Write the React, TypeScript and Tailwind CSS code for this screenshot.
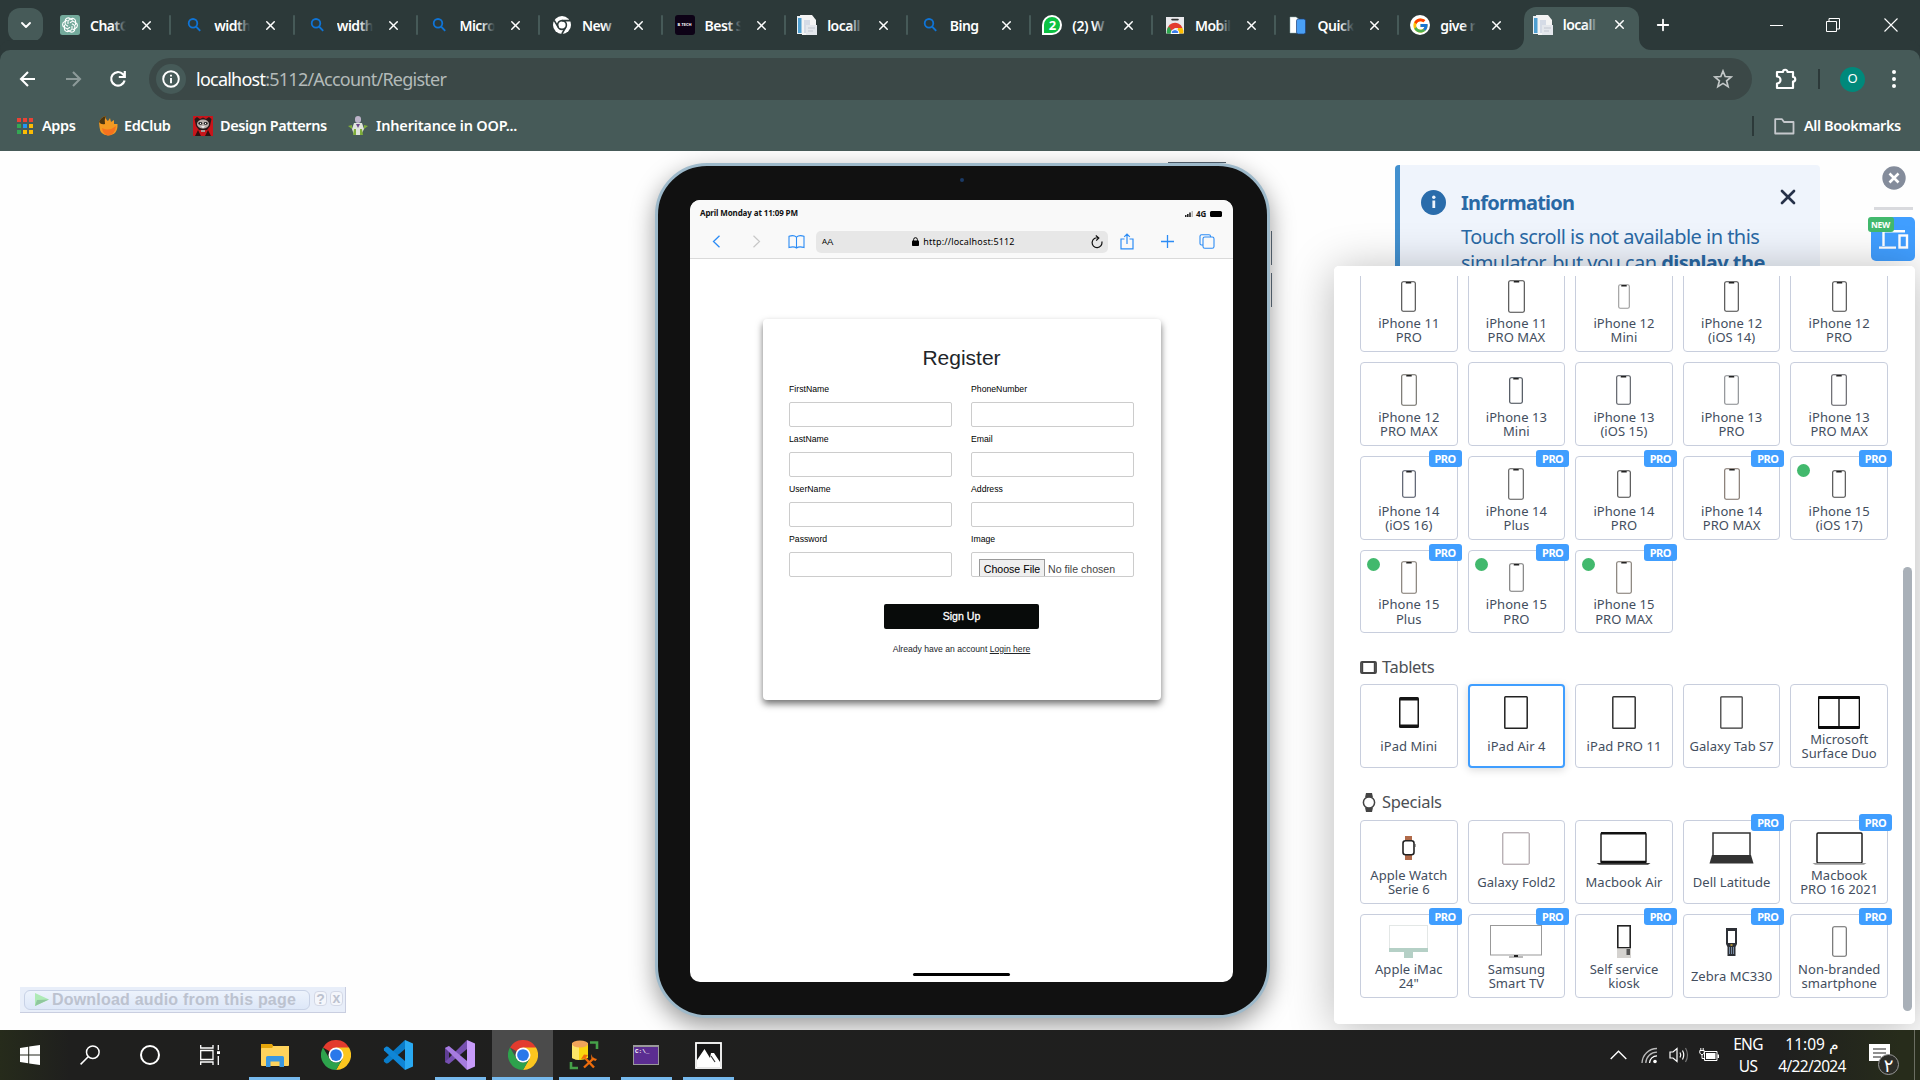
import type { ReactNode } from "react";
import { ChevronDown, X, Plus } from "lucide-react";
import { FcGoogle } from "react-icons/fc";

/* ---------- Favicons ---------- */

const SearchFav = () => (
  <svg width="20" height="20" viewBox="0 0 20 20" fill="none" stroke="#0f74d6" strokeWidth="1.8">
    <circle cx="9" cy="8.3" r="4.3" />
    <path d="M12 11.5 L16.2 15.8" />
  </svg>
);
const ChatFav = () => (
  <svg width="20" height="20" viewBox="0 0 20 20">
    <rect width="20" height="20" rx="2.5" fill="#74aa9c" />
    <g fill="none" stroke="#fff" strokeWidth="1.1">
      {[0, 60, 120, 180, 240, 300].map((a) => (
        <path key={a} transform={`rotate(${a} 10 10)`} d="M8 8.9 V5.6 L11 3.9 A3 3 0 0 1 15.6 6.8 V10" />
      ))}
    </g>
  </svg>
);
const ChromeWhite = () => (
  <svg width="20" height="20" viewBox="0 0 20 20">
    <circle cx="10" cy="10" r="9" fill="#fff" />
    <circle cx="10" cy="10" r="4.4" fill="none" stroke="#2c3939" strokeWidth="1.6" />
    <path d="M10 5.6 H18 M6.2 12.2 L2.2 5.4 M13.8 12.2 L9.8 19" stroke="#2c3939" strokeWidth="1.6" />
  </svg>
);
const BTechFav = () => (
  <div className="flex h-5 w-5 items-center justify-center rounded-[3px] bg-[#0d0216] text-[4px] font-bold text-white">
    B<span className="text-red-500">-</span>TECH
  </div>
);
const DocFav = () => (
  <svg width="20" height="20" viewBox="0 0 20 20">
    <path d="M0 1 H15 V19 H0z" fill="#e9f0f5" />
    <path d="M3 0 H15 L19 5 V20 H5z" fill="#f4f4f4" />
    <path d="M1 3 H4.5 V18 H1z" fill="#4f9fd0" />
    <path d="M7 5 H13 V18 H7z" fill="#d5dbe6" />
    <path d="M9 10 H20 V20 H9z" fill="#e4e7ec" />
    <path d="M11 13 H18 M11 16 H16" stroke="#c2c7d0" />
  </svg>
);
const WhatsFav = () => (
  <div className="relative flex h-5 w-5 items-center justify-center rounded-full rounded-bl-[3px] border-2 border-white bg-[#0cc143] text-[13px] font-bold leading-none text-white">
    2
  </div>
);
const StoreFav = () => (
  <svg width="20" height="20" viewBox="0 0 20 20">
    <path d="M1 2 H19 V18.5 H1z" fill="#e9e9ec" />
    <path d="M7 4.6 H13" stroke="#333" strokeWidth="1.6" strokeLinecap="round" />
    <path d="M2.5 18.5 A7.5 7.5 0 0 1 17.5 13 L10 13z" fill="#e33b2e" />
    <path d="M1.8 18.5 A8 8 0 0 1 4 11.5 L8 18.5z" fill="#2da94f" />
    <path d="M12 18.5 L13 13 H17.5 A8 8 0 0 1 18.3 18.5z" fill="#fdbd00" />
    <path d="M6 18.5 A4 4 0 0 1 14 18.5z" fill="#3a7cec" stroke="#fff" />
  </svg>
);
const QuickFav = () => (
  <svg width="20" height="20" viewBox="0 0 20 20">
    <path d="M2 2 H8 L12 5 V18 H2z" fill="#fff" stroke="#8aa" strokeWidth=".5" />
    <rect x="8.5" y="4" width="9" height="15" rx="1.8" fill="#4aa0f5" stroke="#1d3f7a" strokeWidth=".7" />
  </svg>
);
const GoogleFav = () => (
  <div className="flex h-5 w-5 items-center justify-center rounded-full bg-white">
    <FcGoogle size={17} />
  </div>
);

const tabs: [ReactNode, string][] = [
  [<ChatFav />, "ChatG"],
  [<SearchFav />, "width"],
  [<SearchFav />, "width"],
  [<SearchFav />, "Micro"],
  [<ChromeWhite />, "New"],
  [<BTechFav />, "Best S"],
  [<DocFav />, "locall"],
  [<SearchFav />, "Bing"],
  [<WhatsFav />, "(2) W"],
  [<StoreFav />, "Mobil"],
  [<QuickFav />, "Quick"],
  [<GoogleFav />, "give r"],
];

const TabBody = ({ icon, title, fade }: { icon: ReactNode; title: string; fade: string }) => (
  <>
    <div className="h-5 w-5 shrink-0">{icon}</div>
    <div className="relative ml-[10px] w-[36px] overflow-hidden whitespace-nowrap text-[14px] font-semibold tracking-[-0.5px] text-white">
      {title}
      <div className={`absolute inset-y-0 right-0 w-[14px] bg-gradient-to-r from-transparent ${title === "Bing" ? "" : fade}`} />
    </div>
    <X size={15} strokeWidth={2.3} className="ml-[13px] shrink-0 text-white" />
  </>
);

const TabStrip = () => (
  <div className="flex h-[50px] bg-[#2c3939]">
    <div className="flex w-[50px] shrink-0 items-center pl-2">
      <div className="flex h-[34px] w-[35px] items-center justify-center rounded-[12px] bg-[#465a58]">
        <ChevronDown size={16} strokeWidth={2.8} className="text-white" />
      </div>
    </div>
    {tabs.map(([icon, title], i) => (
      <div key={i} className={`flex shrink-0 items-center pl-[10px] ${i === 0 ? "w-[124.2px]" : "w-[122.6px]"}`}>
        <TabBody icon={icon} title={title} fade="to-[#2c3939]" />
        {i < 11 && <div className="ml-[15px] h-5 w-[2px] rounded bg-[#465a58]" />}
      </div>
    ))}
    <div className="relative ml-[1px] mt-[7px] flex h-[43px] w-[115px] shrink-0 items-center rounded-t-[12px] bg-[#465a58] pb-[8px] pl-[9px]">
      <svg className="absolute -left-3 bottom-0" width="12" height="12">
        <path d="M12 0 V12 H0 A12 12 0 0 0 12 0z" fill="#465a58" />
      </svg>
      <svg className="absolute -right-3 bottom-0" width="12" height="12">
        <path d="M0 0 V12 H12 A12 12 0 0 1 0 0z" fill="#465a58" />
      </svg>
      <TabBody icon={<DocFav />} title="locall" fade="to-[#465a58]" />
    </div>
    <Plus size={18} strokeWidth={2.4} className="ml-[15px] mt-4 shrink-0 text-white" />
    <div className="ml-auto flex items-center pr-[22px] text-white">
      <div className="h-px w-[13px] bg-white" />
      <svg className="ml-[43px]" width="14" height="14" fill="none" stroke="#fff">
        <path d="M.5 3.5 H10.5 V13.5 H.5z M3 3 V.5 H13.5 V11 H11" />
      </svg>
      <svg className="ml-[44px]" width="14" height="14" stroke="#fff" strokeWidth="1.1">
        <path d="M.5 .5 L13.5 13.5 M13.5 .5 L.5 13.5" />
      </svg>
    </div>
  </div>
);

const Toolbar = () => (
  <div className="flex h-[58px] items-center">
    <svg className="ml-[19px]" width="18" height="18" fill="none" stroke="#fff" strokeWidth="2.1">
      <path d="M16 9 H2.5 M9 2 L2 9 L9 16" />
    </svg>
    <svg className="ml-[27px]" width="18" height="18" fill="none" stroke="#8d9a99" strokeWidth="2.1">
      <path d="M2 9 H15.5 M9 2 L16 9 L9 16" />
    </svg>
    <svg className="ml-[27px]" width="18" height="18" fill="none" stroke="#fff" strokeWidth="2.2">
      <path d="M15.6 10.5 A6.8 6.8 0 1 1 14 4.2 L15 5.5 M15.8 1 V7 H9.8" />
    </svg>
    <div className="ml-[22px] flex h-[42px] w-[1603px] items-center rounded-full bg-[#3b4847] pl-[7px] pr-[19px]">
      <div className="flex h-[30px] w-[30px] items-center justify-center rounded-full bg-[#465a58]">
        <svg width="18" height="18" fill="none" stroke="#fff" strokeWidth="1.9">
          <circle cx="9" cy="9" r="7.8" />
          <path d="M9 8 V13.2 M9 4.8 V6.6" />
        </svg>
      </div>
      <div className="ml-[10px] text-[18px] tracking-[-0.76px] text-[#b3bab9]">
        <span className="text-white">localhost</span>:5112/Account/Register
      </div>
      <svg className="ml-auto" width="20" height="20" viewBox="0 0 20 20" fill="none" stroke="#c3c8c8" strokeWidth="1.7">
        <path d="M10 2 L12.2 7.5 L18.2 7.9 L13.6 11.8 L15.1 17.6 L10 14.4 L4.9 17.6 L6.4 11.8 L1.8 7.9 L7.8 7.5z" />
      </svg>
    </div>
    <svg className="ml-[23px]" width="23" height="22" viewBox="0 0 23 22" fill="none" stroke="#fff" strokeWidth="2.2" strokeLinejoin="round">
      <path d="M2 4 H8 A2.2 2.2 0 0 1 12.5 4 H18 V9 A2.2 2.2 0 0 1 18 13.5 V20 H2 V15.5 A3 3 0 0 0 2 8.5z" />
    </svg>
    <div className="ml-[20px] h-5 w-[2px] bg-[#2c3939]" />
    <div className="ml-[20px] flex h-[25px] w-[25px] items-center justify-center rounded-full bg-[#00897b] text-[13px] text-white">O</div>
    <div className="ml-[27px] flex flex-col gap-[3px]">
      <div className="h-1 w-1 rounded-full bg-white" />
      <div className="h-1 w-1 rounded-full bg-white" />
      <div className="h-1 w-1 rounded-full bg-white" />
    </div>
  </div>
);

const appColors = ["bg-[#ea4335]", "bg-[#ea4335]", "bg-[#ea4335]", "bg-[#34a853]", "bg-[#2196f3]", "bg-[#fbbc04]", "bg-[#34a853]", "bg-[#fbbc04]", "bg-[#fbbc04]"];

const Bookmarks = () => (
  <div className="flex h-[43px] items-center pb-[7px] text-[14.5px] font-semibold tracking-[-0.4px] text-white">
    <div className="ml-[17px] grid w-[16px] grid-cols-3 gap-[2px]">
      {appColors.map((c, i) => (
        <div key={i} className={`h-1 w-1 ${c}`} />
      ))}
    </div>
    <span className="ml-[9px] w-[36px] whitespace-nowrap">Apps</span>
    <svg className="ml-[19px]" width="21" height="20" viewBox="0 0 21 20">
      <path d="M2 6 Q4 1 9 0 Q8 3 11 5 L13 2 L14 6 L17 4 L17 8 L20.5 8 Q21 19 11 19.5 Q3 19 2.5 11z" fill="#f39a22" />
      <path d="M2 6 Q4 1 9 0 Q7 4 8 8 Q4 9 2 6z" fill="#4a3510" />
      <path d="M5 12 Q12 16 19 10 Q18 19 11 19.5 Q6 19 5 12z" fill="#f7721e" />
    </svg>
    <span className="ml-[6px] w-[49px] whitespace-nowrap">EdClub</span>
    <svg className="ml-[20px]" width="20" height="20" viewBox="0 0 20 20">
      <rect width="20" height="20" fill="#c8151b" />
      <path d="M1.5 3 L4 1 L7 3 L10 1.5 L13 3 L16 1 L18.5 3 L17 10 L14 14 H6 L3 10z" fill="#2a1a1a" />
      <ellipse cx="10" cy="8" rx="6" ry="4.6" fill="#b9b0ac" />
      <ellipse cx="7.3" cy="7.4" rx="2" ry="1.4" fill="#222" />
      <ellipse cx="12.7" cy="7.4" rx="2" ry="1.4" fill="#222" />
      <circle cx="7.5" cy="7.4" r=".6" fill="#fff" />
      <circle cx="12.5" cy="7.4" r=".6" fill="#fff" />
      <path d="M8 10 H12 L10 12.6z" fill="#eee" />
      <path d="M2 20 L5 14 L8 20z M12 20 L15 14 L18 20z" fill="#301010" />
      <path d="M8 14 H12 V16 H8z" fill="#a99" />
    </svg>
    <span className="ml-[7px] w-[107px] whitespace-nowrap">Design Patterns</span>
    <svg className="ml-[21px]" width="20" height="20" viewBox="0 0 20 20">
      <rect x="7" y="0" width="6" height="7" rx="3" fill="#bcb3c9" />
      <path d="M6 7 H14 L16 13 L13 19 H6 L4 13z" fill="#dfe4dc" />
      <path d="M0 10 L4 9 V13z M20 10 L16 9 V13z M6 13 H8 V19 H5z M12 13 H14 L15 19 H12z" fill="#7fae3a" />
      <path d="M8 8 H12 L10 12z" fill="#6d4a8a" />
    </svg>
    <span className="ml-[8px] whitespace-nowrap tracking-[-0.18px]">Inheritance in OOP...</span>
    <div className="ml-auto h-5 w-[2px] bg-[#2c3939]" />
    <svg className="ml-[20px]" width="21" height="17" fill="none" stroke="#c5c8cc" strokeWidth="1.8" strokeLinejoin="round">
      <path d="M1.2 1.2 H8 L10 4 H19.5 V15.5 H1.2z" />
    </svg>
    <span className="ml-[9px] mr-[17px] w-[99px] whitespace-nowrap">All Bookmarks</span>
  </div>
);

/* ---------- Tablet simulator ---------- */

const blue = "#2c8cf5";

const Field = ({ label, children }: { label: string; children?: ReactNode }) => (
  <div className="h-[50px]">
    <div className="flex h-[18px] items-center text-[8.7px] text-black">{label}</div>
    <div className="mt-[3px] h-[25px] overflow-hidden rounded-[2px] border border-[#ccc] bg-white">{children}</div>
  </div>
);

const Tablet = () => (
  <div className="relative h-[855px] w-[615px] rounded-[52px] border-[3px] border-[#9db9ca] bg-[#111] shadow-[0_8px_24px_rgba(0,0,0,0.4)]">
    <div className="absolute -top-[4px] left-[510px] h-[1px] w-[58px] bg-[#4d5a66]" />
    <div className="absolute -right-[5px] top-[65px] h-[34px] w-[1px] bg-[#4d5a66]" />
    <div className="absolute -right-[5px] top-[107px] h-[34px] w-[1px] bg-[#4d5a66]" />
    <div className="absolute left-[302px] top-[12px] h-1 w-1 rounded-full bg-[#1b3a66]" />
    <div className="ml-[32px] mt-[34px] flex h-[782px] w-[543px] flex-col overflow-hidden rounded-[10px] bg-white font-['Liberation_Sans',sans-serif]">
      <div className="h-[59px] shrink-0 border-b border-[#dadada] bg-[#f9f9f9]">
        <div className="flex h-[25px] items-center pl-[10px] pr-[11px] font-['Noto_Sans',sans-serif] text-[8px] font-bold text-[#111]">
          <span className="tracking-[-0.12px]">April Monday at 11:09 PM</span>
          <svg className="ml-auto mt-[2px]" width="8" height="6">
            <path d="M0 6V4H1.5V6z M2 6V3H3.6V6z M4.2 6V1.5H5.8V6z" fill="#222" />
            <path d="M6.5 6V0H8V6z" fill="#bbb" />
          </svg>
          <span className="ml-[3px] mt-[2px] tracking-[-0.2px]">4G</span>
          <div className="ml-[4px] mt-[2px] h-[6px] w-[12px] rounded-[1.5px] bg-black" />
        </div>
        <div className="flex h-[33px] items-center">
          <svg className="ml-[22px]" width="9" height="13" fill="none" stroke={blue} strokeWidth="1.3">
            <path d="M7.5 .8 L1.5 6.5 L7.5 12.2" />
          </svg>
          <svg className="ml-[31px]" width="9" height="13" fill="none" stroke="#c8c8c8" strokeWidth="1.2">
            <path d="M1.5 .8 L7.5 6.5 L1.5 12.2" />
          </svg>
          <svg className="ml-[27px]" width="17" height="14" fill="none" stroke={blue} strokeWidth="1.1">
            <path d="M8.5 2.2 Q6 -.3 1 1.3 V12.5 Q6 11 8.5 13 Q11 11 16 12.5 V1.3 Q11 -.3 8.5 2.2 V13" />
          </svg>
          <div className="ml-[11px] flex h-[22px] w-[292px] items-center rounded-[5px] bg-[#e7e7e7] pl-[6px] pr-[5px] text-black">
            <span className="pt-px text-[7.5px] leading-none">A</span>
            <span className="text-[9.5px] leading-none">A</span>
            <svg className="ml-[79px]" width="7" height="9" viewBox="0 0 7 9">
              <rect y="3.5" width="7" height="5.5" rx=".8" />
              <path d="M1.6 4 V2.6 A1.9 1.9 0 0 1 5.4 2.6 V4" fill="none" stroke="#000" />
            </svg>
            <span className="ml-[4px] font-['Noto_Sans',sans-serif] text-[9px] tracking-[0.17px]">http://localhost:5112</span>
            <svg className="ml-auto" width="12" height="14" fill="none" stroke="#111" strokeWidth="1.2">
              <path d="M10.8 6.5 A4.9 4.9 0 1 1 7.5 3 M4.8 .5 L7.8 3 L5.2 5.6" />
            </svg>
          </div>
          <svg className="ml-[12px]" width="14" height="17" fill="none" stroke={blue} strokeWidth="1.2">
            <path d="M4.5 6 H1 V15.8 H13 V6 H9.5 M7 11 V1.2 M4.2 3.8 L7 1 L9.8 3.8" />
          </svg>
          <svg className="ml-[27px]" width="13" height="13" stroke={blue} strokeWidth="1.3">
            <path d="M6.5 0 V13 M0 6.5 H13" />
          </svg>
          <svg className="ml-[25px]" width="16" height="15" fill="none" stroke={blue} strokeWidth="1.1">
            <rect x="4" y="3" width="11" height="11.3" rx="1.8" />
            <path d="M4 11 H2.5 Q1 11 1 9.5 V2.2 Q1 .7 2.5 .7 H10 Q11.5 .7 11.5 2.2 V3" />
          </svg>
        </div>
      </div>
      <div className="mx-auto mt-[60px] flex h-[381px] w-[398px] flex-col items-center rounded-[4px] bg-white shadow-[0_4px_7px_rgba(0,0,0,0.55)]">
        <div className="mt-[26px] text-[21px] leading-[26px] text-[#212529]">Register</div>
        <div className="mt-[10px] grid w-[345px] grid-cols-2 gap-x-[19px]">
          <Field label="FirstName" />
          <Field label="PhoneNumber" />
          <Field label="LastName" />
          <Field label="Email" />
          <Field label="UserName" />
          <Field label="Address" />
          <Field label="Password" />
          <Field label="Image">
            <div className="flex pl-[7px] pt-[6px]">
              <div className="h-[22px] w-[66px] border border-[#9a9a9a] bg-[#efefef] text-center text-[10.6px] leading-[19px] text-black">Choose File</div>
              <span className="ml-[3px] whitespace-nowrap text-[10.6px] leading-[21px] text-[#444]">No file chosen</span>
            </div>
          </Field>
        </div>
        <div className="mt-[23px] h-[25px] w-[155px] rounded-[2px] bg-[#080b0a] text-center text-[10.6px] leading-[25px] text-white [-webkit-text-stroke:0.3px_white]">Sign Up</div>
        <div className="mt-[14px] text-[8.6px] leading-[12px] text-[#212529]">
          Already have an account <span className="underline">Login here</span>
        </div>
      </div>
      <div className="mx-auto mb-[6px] mt-auto h-[3px] w-[97px] rounded-full bg-black" />
    </div>
  </div>
);

/* ---------- Device picker ---------- */

const Phone = ({ w, h, c, notch = "#222" }: { w: number; h: number; c: string; notch?: string }) => (
  <svg width={w} height={h}>
    <rect x=".7" y=".7" width={w - 1.4} height={h - 1.4} rx="1.6" fill="#fff" stroke={c} strokeWidth="1.1" />
    {notch !== "none" && <rect x={w / 2 - 2.8} y="1" width="5.6" height="1.6" rx=".6" fill={notch} />}
  </svg>
);
const Slab = ({ w, h, c, s = 1.5 }: { w: number; h: number; c: string; s?: number }) => (
  <svg width={w} height={h}>
    <rect x=".8" y=".8" width={w - 1.6} height={h - 1.6} rx=".8" fill="#fff" stroke={c} strokeWidth={s} />
  </svg>
);
const Laptop = ({ dark, base }: { dark?: boolean; base: string }) => (
  <svg width="55" height="33">
    <rect x="5" y="1" width="45" height="30" rx="1" fill="#fff" stroke="#111" strokeWidth="1.4" />
    {dark && <path d="M5 1.2 H50 M5 30 H50" stroke="#111" strokeWidth="2.4" />}
    <path d="M.5 31 H54.5 L52 32.8 H3z" fill={base} />
  </svg>
);

type Device = { name: string[]; icon: ReactNode; pro?: boolean; dot?: boolean; active?: boolean };

const phones: Device[] = [
  { name: ["iPhone 11", "PRO"], icon: <Phone w={15} h={31} c="#444" /> },
  { name: ["iPhone 11", "PRO MAX"], icon: <Phone w={17} h={33} c="#444" /> },
  { name: ["iPhone 12", "Mini"], icon: <Phone w={12} h={25} c="#999" /> },
  { name: ["iPhone 12", "(iOS 14)"], icon: <Phone w={15} h={31} c="#444" /> },
  { name: ["iPhone 12", "PRO"], icon: <Phone w={15} h={31} c="#444" /> },
  { name: ["iPhone 12", "PRO MAX"], icon: <Phone w={16} h={32} c="#6a6862" /> },
  { name: ["iPhone 13", "Mini"], icon: <Phone w={14} h={27} c="#3d444e" /> },
  { name: ["iPhone 13", "(iOS 15)"], icon: <Phone w={15} h={30} c="#50545c" /> },
  { name: ["iPhone 13", "PRO"], icon: <Phone w={15} h={30} c="#85888c" /> },
  { name: ["iPhone 13", "PRO MAX"], icon: <Phone w={16} h={32} c="#5a5a60" /> },
  { name: ["iPhone 14", "(iOS 16)"], icon: <Phone w={14} h={28} c="#4a5060" />, pro: true },
  { name: ["iPhone 14", "Plus"], icon: <Phone w={16} h={32} c="#555" />, pro: true },
  { name: ["iPhone 14", "PRO"], icon: <Phone w={14} h={28} c="#444" />, pro: true },
  { name: ["iPhone 14", "PRO MAX"], icon: <Phone w={16} h={32} c="#7a6e66" />, pro: true },
  { name: ["iPhone 15", "(iOS 17)"], icon: <Phone w={14} h={28} c="#444" />, pro: true, dot: true },
  { name: ["iPhone 15", "Plus"], icon: <Phone w={16} h={33} c="#7d766e" />, pro: true, dot: true },
  { name: ["iPhone 15", "PRO"], icon: <Phone w={15} h={29} c="#777" />, pro: true, dot: true },
  { name: ["iPhone 15", "PRO MAX"], icon: <Phone w={16} h={33} c="#7d766e" />, pro: true, dot: true },
];

const tablets: Device[] = [
  {
    name: ["iPad Mini"],
    icon: (
      <svg width="20" height="31">
        <rect width="20" height="31" rx="1.5" fill="#151515" />
        <rect x="1.5" y="3.5" width="17" height="24" fill="#fff" />
      </svg>
    ),
  },
  { name: ["iPad Air 4"], icon: <Slab w={24} h={33} c="#222" />, active: true },
  { name: ["iPad PRO 11"], icon: <Slab w={24} h={33} c="#333" /> },
  { name: ["Galaxy Tab S7"], icon: <Slab w={23} h={33} c="#333" s={1.2} /> },
  {
    name: ["Microsoft", "Surface Duo"],
    icon: (
      <svg width="42" height="33">
        <rect width="42" height="33" rx="1" fill="#0a0a0a" />
        <path d="M1.3 3 H20.3 V30 H1.3z M21.7 3 H40.7 V30 H21.7z" fill="#fff" />
      </svg>
    ),
  },
];

const specials: Device[] = [
  {
    name: ["Apple Watch", "Serie 6"],
    icon: (
      <svg width="14" height="24">
        <path d="M3 0 H10 L10 5 H3z M3 19 H10 V24 H3z" fill="#b06a4a" />
        <rect x="1" y="4.8" width="11" height="14" rx="2.5" fill="#fff" stroke="#222" strokeWidth="1.6" />
        <path d="M13 8 V11" stroke="#444" />
      </svg>
    ),
  },
  { name: ["Galaxy Fold2"], icon: <Slab w={28} h={33} c="#9c9096" s={1} /> },
  { name: ["Macbook Air"], icon: <Laptop dark base="#333" /> },
  {
    name: ["Dell Latitude"],
    pro: true,
    icon: (
      <svg width="45" height="32">
        <rect x="4" y="1" width="37" height="23" fill="#fff" stroke="#333" strokeWidth="1.5" />
        <path d="M3 23 H42 L44.5 31.5 H.5z" fill="#333" />
      </svg>
    ),
  },
  { name: ["Macbook", "PRO 16 2021"], pro: true, icon: <Laptop base="#9a9a9a" /> },
  {
    name: ["Apple iMac", '24"'],
    pro: true,
    icon: (
      <svg width="39" height="33">
        <rect x=".5" y=".5" width="38" height="26" fill="#fff" stroke="#e3e7e6" />
        <path d="M0 23 H39 V27 H0z M15 27 H24 V33 H15z" fill="#b5d0c6" />
      </svg>
    ),
  },
  {
    name: ["Samsung", "Smart TV"],
    pro: true,
    icon: (
      <svg width="52" height="33">
        <rect x=".5" y=".5" width="51" height="29.5" fill="#fff" stroke="#999" />
        <path d="M19 32 H33 M26 30 V32" stroke="#777" strokeWidth="1.2" />
        <path d="M24 31 H28" stroke="#222" strokeWidth="2" />
      </svg>
    ),
  },
  {
    name: ["Self service", "kiosk"],
    pro: true,
    icon: (
      <svg width="14" height="33">
        <rect x=".8" y=".8" width="12.4" height="22" fill="#fff" stroke="#222" strokeWidth="1.6" />
        <path d="M0 23.5 H14 V33 H0z" fill="#d4d2cf" />
        <path d="M9.5 24 H13 V30 H9.5z" fill="#555" />
      </svg>
    ),
  },
  {
    name: ["Zebra MC330"],
    pro: true,
    icon: (
      <svg width="11" height="30">
        <path d="M0 1 H11 V17 L9.5 20 V29 H1.5 V20 L0 17z" fill="#2d3036" />
        <rect x="2" y="4" width="7" height="12" fill="#fff" />
        <path d="M3.5 20 V27 M5.5 20 V27 M7.5 20 V27" stroke="#8296b0" strokeWidth=".9" />
        <path d="M4.5 18 H6.5" stroke="#e0b030" strokeWidth="1.4" />
      </svg>
    ),
  },
  { name: ["Non-branded", "smartphone"], pro: true, icon: <Phone w={15} h={31} c="#666" notch="none" /> },
];

const DeviceGrid = ({ items }: { items: Device[] }) => (
  <div className="grid grid-cols-5 gap-[10px]">
    {items.map((d) => (
      <div
        key={d.name.join(" ")}
        className={`relative flex h-[83.75px] flex-col items-center rounded-[4px] bg-white ${
          d.active ? "border-2 border-[#409eff] pt-[6px] shadow-[0_2px_8px_rgba(0,0,0,0.15)]" : "border border-[#c8cedd] pt-[7px]"
        }`}
      >
        <div className="flex h-10 shrink-0 items-center">{d.icon}</div>
        <div className="-mt-px flex h-[30px] shrink-0 flex-col justify-center whitespace-nowrap text-center text-[13px] leading-[14.3px] tracking-[0.05px] text-[#434e5e]">
          {d.name.map((n) => (
            <div key={n}>{n}</div>
          ))}
        </div>
        {d.pro && (
          <div className="absolute -right-[5px] -top-[7px] h-[17px] w-[33px] rounded-[3px] bg-[#409eff] text-center text-[11px] font-bold leading-[17px] tracking-[-0.5px] text-white">
            PRO
          </div>
        )}
        {d.dot && <div className="absolute left-[6px] top-[7px] h-[13px] w-[13px] rounded-full bg-[#42b96d]" />}
      </div>
    ))}
  </div>
);

const DevicePanel = () => (
  <div className="absolute left-[1334px] top-[115px] h-[758px] w-[581px] overflow-hidden rounded-[5px] bg-white">
    <div className="mt-[10px] flex h-[748px] flex-col overflow-hidden pl-[26px] pr-[27px]">
      <div className="-mt-[7.6px]">
        <DeviceGrid items={phones} />
      </div>
      <div className="mt-[21px] flex h-[26px] items-center text-[16.5px] tracking-[-0.35px] text-[#4c4f54]">
        <svg className="mr-[5px]" width="17" height="13">
          <rect x="1" y="1" width="15" height="11" rx="1" fill="none" stroke="#444" strokeWidth="1.8" />
          <path d="M2.6 1 V12 M14.4 1 V12" stroke="#444" strokeWidth="1.2" />
        </svg>
        Tablets
      </div>
      <div className="mt-[4px]">
        <DeviceGrid items={tablets} />
      </div>
      <div className="mt-[21px] flex h-[26px] items-center text-[16.5px] tracking-[-0.3px] text-[#4c4f54]">
        <svg className="ml-[2px] mr-[6px]" width="14" height="19">
          <path d="M4 0 H10 L11 4.5 H3z M3 14.5 H11 L10 19 H4z" fill="#444" />
          <circle cx="7" cy="9.5" r="5.6" fill="#fff" stroke="#444" strokeWidth="1.5" />
        </svg>
        Specials
      </div>
      <div className="mt-[5px]">
        <DeviceGrid items={specials} />
      </div>
    </div>
    <div className="absolute left-[569px] top-[301px] h-[444px] w-[9px] rounded-full bg-[#a9b0b8]" />
  </div>
);

const InfoBox = () => (
  <div className="absolute left-[1395px] top-[14px] flex h-[140px] w-[425px] rounded-[4px] border-l-[5px] border-[#4290cf] bg-[#eff4fc] text-[#2a69a5]">
    <svg className="ml-[21px] mt-[25px] shrink-0" width="25" height="25">
      <circle cx="12.5" cy="12.5" r="12.5" fill="#2a6cab" />
      <path d="M12.8 10.5 V18" stroke="#eff4fc" strokeWidth="2.8" />
      <circle cx="12.8" cy="7.2" r="1.7" fill="#eff4fc" />
    </svg>
    <div className="ml-[15px] mt-[23px] w-[311px] shrink-0">
      <div className="text-[20px] font-bold leading-[30px] tracking-[-0.75px]">Information</div>
      <div className="mt-[6px] whitespace-nowrap text-[20px] leading-[26px] tracking-[-0.53px]">
        Touch scroll is not available in this
        <br />
        simulator, but you can <b>display the</b>
      </div>
    </div>
    <X size={24} strokeWidth={2.7} className="ml-[4px] mt-[20px] shrink-0 text-[#263149]" />
  </div>
);

const SideTools = () => (
  <div className="absolute left-[1867px] top-[15px] flex w-[48px] flex-col items-center">
    <svg className="ml-[5px]" width="24" height="24">
      <circle cx="12" cy="12" r="11.7" fill="#848c9b" />
      <path d="M7.5 7.5 L16.5 16.5 M16.5 7.5 L7.5 16.5" stroke="#fff" strokeWidth="2.6" />
    </svg>
    <div className="ml-[5px] mt-[17px] h-[3px] w-[39px] bg-[#d9dade]" />
    <div className="relative ml-[3px] mt-[7px] h-[44px] w-[44px] rounded-[5px] bg-[#409eff]">
      <svg className="absolute left-[8px] top-[12px]" width="30" height="21" fill="none" stroke="#fff" strokeWidth="2.4">
        <path d="M26 2.2 H4.5 V17 M0 18.6 H17" />
        <rect x="20.5" y="6.5" width="7.5" height="12" />
      </svg>
      <div className="absolute -left-[3px] top-0 h-[15px] w-[26px] rounded-[3px] bg-[#42b96d] text-center text-[8.5px] font-bold leading-[16px] tracking-[-0.3px] text-white">NEW</div>
    </div>
  </div>
);

const DownloadWidget = () => (
  <div className="absolute left-[20px] top-[836px] flex h-[26px] w-[326px] items-center border-b border-r border-[#c9cee0] bg-[#e8eef9] pl-[4px] font-['Liberation_Sans',sans-serif] font-bold text-[#bcc2cf]">
    <div className="flex h-[20px] w-[286px] items-center rounded-[6px] border-[1.5px] border-[#c8d2e6] bg-gradient-to-b from-[#edf3fc] to-[#dde7f8] pl-[9px]">
      <svg width="16" height="13">
        <path d="M1 0 L15 6.5 L1 13z" fill="#aeeab6" />
        <path d="M15 6.5 L1 13 L3 7z" fill="#8fc79d" />
      </svg>
      <span className="ml-[2px] whitespace-nowrap text-[16px] tracking-[0.2px]">Download audio from this page</span>
    </div>
    <div className="mb-[3px] ml-[4px] h-[15px] w-[13px] rounded-[4px] border border-[#d3d8e6] bg-[#f4f6fb] text-center text-[14px] leading-[14px]">?</div>
    <div className="mb-[3px] ml-[3px] h-[15px] w-[13px] rounded-[4px] border border-[#d3d8e6] bg-[#f4f6fb] text-center text-[14px] leading-[12px]">x</div>
  </div>
);

/* ---------- Taskbar ---------- */

const ChromeIcon = () => (
  <svg width="30" height="30" viewBox="0 0 48 48">
    <path d="M24 24 L3.2 12 A24 24 0 0 1 44.8 12z" fill="#e33b2e" />
    <path d="M24 12 H44.8 A24 24 0 0 1 24 48 L34.4 30z" fill="#fcc61f" />
    <path d="M3.2 12 L13.6 30 A12 12 0 0 0 34.4 30 L24 48 A24 24 0 0 1 3.2 12z" fill="#2da24c" />
    <circle cx="24" cy="24" r="12" fill="#fff" />
    <circle cx="24" cy="24" r="9.4" fill="#2a78ea" />
  </svg>
);

const TaskItem = ({ children, line, active, w }: { children: ReactNode; line?: boolean; active?: boolean; w: string }) => (
  <div className={`relative flex h-[50px] shrink-0 items-center justify-center ${w} ${active ? "bg-[#4b4b4b]" : ""}`}>
    {children}
    {line && <div className={`absolute bottom-0 h-[3px] bg-[#76b9ed] ${active ? "w-full" : "w-[51px]"}`} />}
  </div>
);

const Taskbar = () => (
  <div className="flex h-[50px] bg-[linear-gradient(90deg,#262b1b,#1f1f1e_70px,#1f1f1f_1780px,#272c1b_1900px)] text-white">
    <TaskItem w="w-[60px]">
      <svg width="20" height="20" fill="#fff">
        <path d="M0 3 L8.2 1.8 V9.5 H0z M9.2 1.6 L20 0 V9.5 H9.2z M0 10.5 H8.2 V18.2 L0 17z M9.2 10.5 H20 V20 L9.2 18.4z" />
      </svg>
    </TaskItem>
    <TaskItem w="w-[60px]">
      <svg width="20" height="20" fill="none" stroke="#fff" strokeWidth="1.5">
        <circle cx="12.8" cy="7.2" r="6.3" />
        <path d="M8.2 11.8 L.6 19.4" />
      </svg>
    </TaskItem>
    <TaskItem w="w-[60px]">
      <div className="h-5 w-5 rounded-full border-[2.6px] border-white" />
    </TaskItem>
    <TaskItem w="w-[60px]">
      <svg width="20" height="20" fill="none" stroke="#fff" strokeWidth="1.3">
        <path d="M.7 0 V3 H13 V0 M.7 20 V17 H13 V20 M.7 5.5 H13 V14.5 H.7z M18.3 0 V5 M18.3 11 V20" />
        <path d="M17 6.2 H20 V9 H17z" fill="#fff" stroke="none" />
      </svg>
    </TaskItem>
    <TaskItem w="w-[69px]" line>
      <svg width="28" height="24">
        <path d="M0 1 H11 L13 4 H27 V8 H0z" fill="#e5a50a" />
        <rect y="5" width="28" height="18" rx="1" fill="#ffd35c" />
        <path d="M12 3 H28 V8 H10z" fill="#ffd35c" />
        <path d="M5 24 V14.5 Q5 13 6.5 13 H21.5 Q23 13 23 14.5 V24 H18.5 V18.5 H9.5 V24z" fill="#3a97e0" />
      </svg>
    </TaskItem>
    <TaskItem w="w-[54px]">
      <ChromeIcon />
    </TaskItem>
    <TaskItem w="w-[70px]">
      <svg width="30" height="30" viewBox="0 0 30 30">
        <path d="M22 0 L1 19.5 L.8 21.5 L3.2 23.5 L5 23.3 L22 9z" fill="#0a7cc9" />
        <path d="M22 30 L1 10.5 L.8 8.5 L3.2 6.5 L5 6.7 L22 21z" fill="#0f86d6" />
        <path d="M22 0 L30 3.5 V26.5 L22 30z" fill="#29a9f2" />
      </svg>
    </TaskItem>
    <TaskItem w="w-[54px]" line>
      <svg width="30" height="30" viewBox="0 0 30 30">
        <path d="M0 8 L4 6 V24 L0 22z" fill="#5f3d94" />
        <path d="M4 24 L0 22 L22 0 V9z" fill="#7650b0" />
        <path d="M0 8 L4 6 L22 21 V30z" fill="#a67be0" />
        <path d="M22 0 L30 3.5 V26.5 L22 30z" fill="#c79bfa" />
      </svg>
    </TaskItem>
    <div className="w-[5px]" />
    <TaskItem w="w-[61px]" line active>
      <ChromeIcon />
    </TaskItem>
    <TaskItem w="w-[62px]" line>
      <svg width="30" height="30" viewBox="0 0 30 30">
        <path d="M21 2.5 H28 V9 M2 22 V28 H9" fill="none" stroke="#45a049" strokeWidth="2.6" />
        <path d="M3 3 H19 V18 Q11 22 3 18z" fill="#fbd50f" />
        <path d="M3 4 H10 V20 Q6 20 3 18z" fill="#fde568" />
        <ellipse cx="11" cy="4" rx="8" ry="3.4" fill="#f0a35a" />
        <path d="M16 18 L25 27.5 M25 18 L15 27.5" stroke="#ee6c0c" strokeWidth="2.4" />
        <path d="M12 19 L15 14.5 L19 15 L16 18.5z M22 14 L24 18 L28 19 L26.5 21 L22.5 19.5z" fill="#ee6c0c" />
      </svg>
    </TaskItem>
    <TaskItem w="w-[62px]" line>
      <div className="h-[20px] w-[26px] border border-t-2 border-[#999] bg-[#5b2d91] pl-px pt-[2px] font-['Liberation_Mono',monospace] text-[6px] font-bold leading-[6px]">C:\_</div>
    </TaskItem>
    <TaskItem w="w-[62px]" line>
      <svg width="27" height="27">
        <rect x="1" y="1" width="25" height="25" fill="#151515" stroke="#fff" strokeWidth="1.8" />
        <path d="M2 18 L9.5 7 L15 16 L16 11 L19 11 L25 20 V25 H2z" fill="#fff" />
        <path d="M16 14 L20 20" stroke="#333" strokeWidth="1.2" />
      </svg>
    </TaskItem>
    <div className="ml-auto flex items-center text-[15.5px] tracking-[-0.35px]">
      <svg width="17" height="10" fill="none" stroke="#fff" strokeWidth="1.4">
        <path d="M.7 9 L8.5 1.2 L16.3 9" />
      </svg>
      <svg className="ml-[14px]" width="17" height="17" fill="none" stroke="#fff" strokeWidth="1.3">
        <path d="M1 16 A15 15 0 0 1 16 1.5 M4.8 16 A11.2 11.2 0 0 1 16 5.2" stroke="#bbb" />
        <path d="M8.5 16 A7.5 7.5 0 0 1 16 8.8" />
        <circle cx="14" cy="14.5" r="1.8" fill="#fff" stroke="none" />
      </svg>
      <svg className="ml-[11px]" width="21" height="18" fill="none" stroke="#fff" strokeWidth="1.2">
        <path d="M1 6 H4 L8 2.5 V15.5 L4 12 H1z M11 6.5 Q12.5 9 11 11.5 M13.5 4.5 Q16 9 13.5 13.5" />
        <path d="M16.5 2 Q20.5 9 16.5 16" stroke="#777" />
      </svg>
      <svg className="ml-[9px]" width="20" height="14">
        <path d="M5.5 3.5 H18 V12.5 H5.5z" fill="#1f1f1f" stroke="#fff" />
        <path d="M7 5 H16.5 V11 H7z" fill="#fff" />
        <path d="M19.3 6.5 V10" stroke="#fff" strokeWidth="1.4" />
        <path d="M.8 2.5 H5.2 V5 Q3 8.5 .8 5z M1.8 0 V3 M4.2 0 V3 M3 7 V10.5 H6" fill="#1f1f1f" stroke="#fff" />
      </svg>
      <div className="ml-[13px] flex w-[32px] flex-col items-center leading-[22px] tracking-[-0.65px]">
        <span>ENG</span>
        <span>US</span>
      </div>
      <div className="ml-[14px] flex w-[68px] flex-col items-center whitespace-nowrap leading-[22px] tracking-[-0.7px]">
        <span>11:09 م</span>
        <span>4/22/2024</span>
      </div>
      <div className="relative ml-[23px] h-[34px] w-[32px]">
        <svg className="absolute left-0 top-[6px]" width="21" height="22">
          <path d="M0 0 H21 V17 H15 V22 L10 17 H0z" fill="#fff" />
          <path d="M4 5 H17 M4 9 H17 M4 13 H12" stroke="#222" strokeWidth="1.2" />
        </svg>
        <div className="absolute left-[9px] top-[16px] flex h-[21px] w-[21px] items-center justify-center rounded-full border border-[#999] bg-[#2c2d28] text-[18px] leading-none">٢</div>
      </div>
      <div className="ml-[13px] mr-[5px] h-[50px] w-px bg-[#6b6e62]" />
    </div>
  </div>
);

export default function App() {
  return (
    <div className="flex h-[1080px] w-[1920px] flex-col overflow-hidden bg-white font-['Noto_Sans','DejaVu_Sans',sans-serif]">
      <TabStrip />
      <div className="h-[101px] rounded-t-[10px] bg-[#465a58] shadow-[0_-10px_0_#2c3939]">
        <Toolbar />
        <Bookmarks />
      </div>
      <main className="relative h-[879px] overflow-hidden bg-[#fefefe]">
        <div className="flex pl-[655px] pt-[12px]">
          <Tablet />
        </div>
        <InfoBox />
        <SideTools />
        <div className="absolute left-[1334px] top-[115px] h-[758px] w-[581px] rounded-[5px] shadow-[0_4px_45px_rgba(0,0,0,0.28)]" />
        <DevicePanel />
        <DownloadWidget />
      </main>
      <Taskbar />
    </div>
  );
}
